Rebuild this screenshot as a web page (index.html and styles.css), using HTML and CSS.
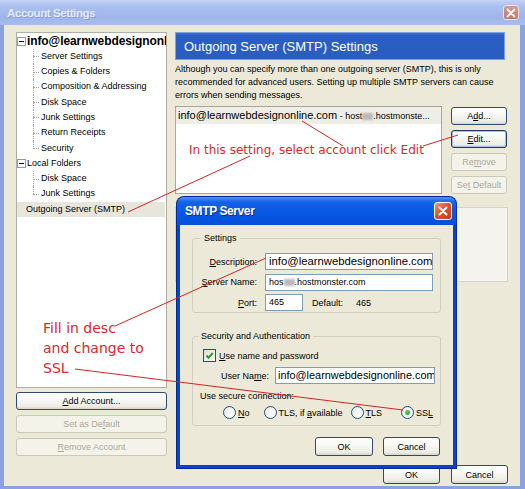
FILE: index.html
```html
<!DOCTYPE html>
<html>
<head>
<meta charset="utf-8">
<title>Account Settings</title>
<link rel="stylesheet" href="styles.css">
</head>
<body>
<div class="win">
  <div class="titlebar">
    <span class="title">Account Settings</span>
    <span class="xbtn xbtn-inactive"><svg width="10" height="10" viewBox="0 0 10 10"><path d="M1.5 1.5 L8.5 8.5 M8.5 1.5 L1.5 8.5" stroke="#fff" stroke-width="1.8" stroke-linecap="round"/></svg></span>
  </div>
  <div class="frame">
    <div class="client">
      <div class="leftcol">
        <div class="tree">
          <div class="node root"><span class="exp"></span><span class="acct">info@learnwebdesignonl</span></div>
          <ul class="kids">
            <li>Server Settings</li>
            <li>Copies &amp; Folders</li>
            <li>Composition &amp; Addressing</li>
            <li>Disk Space</li>
            <li>Junk Settings</li>
            <li>Return Receipts</li>
            <li>Security</li>
          </ul>
          <div class="node root"><span class="exp"></span><span>Local Folders</span></div>
          <ul class="kids">
            <li>Disk Space</li>
            <li>Junk Settings</li>
          </ul>
          <div class="node sel"><span>Outgoing Server (SMTP)</span></div>
        </div>
        <div class="leftbtns">
          <button class="btn wide"><span><u>A</u>dd Account...</span></button>
          <button class="btn wide" disabled><span>Set as De<u>f</u>ault</span></button>
          <button class="btn wide" disabled><span><u>R</u>emove Account</span></button>
        </div>
      </div>
      <div class="rightcol">
        <div class="hdr">Outgoing Server (SMTP) Settings</div>
        <p class="info">Although you can specify more than one outgoing server (SMTP), this is only recommended for advanced users. Setting up multiple SMTP servers can cause errors when sending messages.</p>
        <div class="listrow">
          <div class="list">
            <div class="item"><span class="em">info@learnwebdesignonline.com</span><span class="sm"> - host<i class="blur"></i>.hostmonste...</span></div>
          </div>
          <div class="sidebtns">
            <button class="btn"><span>A<u>d</u>d...</span></button>
            <button class="btn focus"><span><u>E</u>dit...</span></button>
            <button class="btn" disabled><span>Re<u>m</u>ove</span></button>
            <button class="btn" disabled><span>Se<u>t</u> Default</span></button>
          </div>
        </div>
        <div class="details"></div>
        <div class="okrow">
          <button class="btn okb">OK</button>
          <button class="btn okb">Cancel</button>
        </div>
      </div>
    </div>
  </div>
</div>

<div class="dlg">
  <div class="dlg-title">
    <span class="dlg-name">SMTP Server</span>
    <span class="xbtn xbtn-active"><svg width="10" height="10" viewBox="0 0 10 10"><path d="M1.5 1.5 L8.5 8.5 M8.5 1.5 L1.5 8.5" stroke="#fff" stroke-width="2" stroke-linecap="round"/></svg></span>
  </div>
  <div class="dlg-body">
    <fieldset class="grp g1">
      <legend>Settings</legend>
      <div class="form">
        <label class="lbl"><u>D</u>escription:</label>
        <div class="field em">info@learnwebdesignonline.com</div>
        <label class="lbl"><u>S</u>erver Name:</label>
        <div class="field">hos<i class="blur"></i>.hostmonster.com</div>
        <label class="lbl"><u>P</u>ort:</label>
        <div class="portrow"><div class="field port">465</div><span class="deflbl">Default:</span><span>465</span></div>
      </div>
    </fieldset>
    <fieldset class="grp g2">
      <legend>Security and Authentication</legend>
      <div class="chkrow">
        <span class="chk"><svg width="11" height="11" viewBox="0 0 11 11"><path d="M2.5 5.5 L4.5 7.8 L8.8 3" stroke="#21a121" stroke-width="2" fill="none"/></svg></span>
        <span><u>U</u>se name and password</span>
      </div>
      <div class="userrow">
        <label class="ulbl">User Na<u>m</u>e:</label>
        <div class="field em user">info@learnwebdesignonline.com</div>
      </div>
      <div class="secl">Use secure connection:</div>
      <div class="radios">
        <span class="rad"><span class="circ"></span><span><u>N</u>o</span></span>
        <span class="rad"><span class="circ"></span><span>TLS, if <u>a</u>vailable</span></span>
        <span class="rad"><span class="circ"></span><span><u>T</u>LS</span></span>
        <span class="rad"><span class="circ on"></span><span>SS<u>L</u></span></span>
      </div>
    </fieldset>
    <div class="dlgbtns">
      <button class="btn dbtn">OK</button>
      <button class="btn dbtn">Cancel</button>
    </div>
  </div>
</div>

<svg class="ann" width="525" height="489" viewBox="0 0 525 489">
  <g stroke="#d42424" stroke-width="1" fill="none">
    <line x1="128" y1="212" x2="250" y2="156"/>
    <line x1="302" y1="121" x2="343" y2="146"/>
    <line x1="423" y1="146" x2="458" y2="135"/>
    <line x1="115" y1="326" x2="266" y2="258"/>
    <line x1="75" y1="369" x2="403" y2="410"/>
  </g>
</svg>
<div class="note n1">In this setting, select account click Edit</div>
<div class="note n2">Fill in desc<br>and change to<br>SSL</div>
</body>
</html>
```

FILE: styles.css
```css
* { box-sizing: border-box; }
html, body { margin: 0; padding: 0; }
body {
  width: 525px; height: 489px; overflow: hidden; position: relative;
  font-family: "Liberation Sans", Arial, sans-serif; font-size: 9px; color: #000;
  background: #ece9d8;
}
u { text-decoration: underline; text-underline-offset: 1px; }

.win { width: 525px; height: 489px; display: flex; flex-direction: column; background: #8aa2e0; }
.titlebar {
  height: 25px; flex: none; display: flex; align-items: center; justify-content: space-between;
  padding: 0 6px 0 7px;
  background: linear-gradient(#c4d3f5, #abbfef 25%, #9fb5ea 70%, #a9bdee);
}
.title { font-weight: bold; font-size: 11.5px; letter-spacing: -0.4px; color: #e3eaf9; text-shadow: 1px 1px 0 #8a9fd8; }
.xbtn { display: flex; align-items: center; justify-content: center; border-radius: 3px; }
.xbtn-inactive { width: 16px; height: 15px; background: linear-gradient(#d49c94, #c27468); border: 1px solid #e9e2f0; }
.xbtn-active { width: 18px; height: 18px; background: linear-gradient(135deg, #f09a7c, #e0532f 45%, #c73c1c); border: 1px solid #fff; }

.frame { flex: 1; display: flex; padding: 0 5px 3px 4px; }
.client { flex: 1; display: flex; gap: 8px; padding: 7px 12px 2px 12px; background: #ece9d8; }

.leftcol { width: 151px; flex: none; display: flex; flex-direction: column; }
.tree { height: 356px; background: #fff; border: 1px solid #aeb0a8; padding-top: 0.5px; overflow: hidden; }
.node { height: 15.3px; line-height: 15.3px; display: flex; align-items: center; white-space: nowrap; overflow: hidden; }
.root .exp {
  width: 9px; height: 9px; flex: none; border: 1px solid #919b9c; background: #fff; position: relative; margin-right: 1px;
}
.root .exp::after { content: ""; position: absolute; left: 1px; top: 3px; width: 5px; height: 1px; background: #000; }
.acct { font-weight: bold; font-size: 12px; letter-spacing: -0.1px; }
.sel { background: #e8e6dc; padding-left: 9px; margin-right: 1px; }
.kids { list-style: none; margin: 0; padding: 0 0 0 24px; }
.kids li { height: 15.3px; line-height: 15.3px; white-space: nowrap; position: relative; }
.kids li::before { content: ""; position: absolute; left: -8px; top: 7.5px; width: 6px; border-top: 1px dotted #a0a0a0; }
.kids li::after { content: ""; position: absolute; left: -8px; top: 0; height: 15.3px; border-left: 1px dotted #a0a0a0; }
.kids li:last-child::after { height: 8px; }

.leftbtns { display: flex; flex-direction: column; gap: 5px; margin-top: 4px; }

.btn {
  font-family: "Liberation Sans", Arial, sans-serif; font-size: 9px; color: #000;
  height: 18px; padding: 0; border: 1px solid #2c4a74; border-radius: 3px;
  background: linear-gradient(#ffffff, #f6f6f1 50%, #ecebe3 85%, #d8d5c6);
  text-align: center; white-space: nowrap;
}
.btn:disabled { color: #aca899; border-color: #cac8bb; background: #f4f3ea; }
.btn.focus { border: 1px solid #1e3b63; box-shadow: inset 0 0 0 1px #a9c0e6; }
.btn.wide { width: 151px; }

.rightcol { width: 333px; flex: none; display: flex; flex-direction: column; }
.hdr {
  height: 28px; margin-right: 3px; flex: none; display: flex; align-items: center; padding-left: 8px;
  background: linear-gradient(#3d6fcf, #2a5ec2 10%, #2a5dc0); color: #fff; font-size: 13px; border: 1px solid #7f9fda;
}
.info { margin: 3px 0 0; line-height: 13px; width: 330px; }
.listrow { display: flex; gap: 9px; margin-top: 4px; height: 88px; flex: none; }
.list { width: 267px; height: 88px; background: #fff; border: 1px solid #a5a7a0; padding: 0; }
.item { height: 17px; line-height: 17px; padding-left: 2px; background: #efeee6; white-space: nowrap; overflow: hidden; }
.em { font-size: 11px; }
.sm { font-size: 9px; }
.blur { display: inline-block; width: 11px; height: 7px; background: #b9b9b9; filter: blur(1.3px); vertical-align: -1px; }
.sidebtns { width: 56px; display: flex; flex-direction: column; gap: 5px; padding-top: 1px; }

.details { margin-top: 13px; height: 75px; background: #f4f3ee; border: 1px solid #d6d4c8; flex: none; }
.okrow { margin-top: auto; display: flex; justify-content: flex-end; gap: 11px; }
.okb { width: 57px; height: 19px; }

/* SMTP dialog (overlapping window) */
.dlg {
  position: absolute; left: 177px; top: 197px; width: 279px; height: 271px;
  background: #0842cf; border-radius: 7px 7px 0 0; padding: 0 3px 3px;
  display: flex; flex-direction: column; box-shadow: 0 0 0 1px #002a9c;
}
.dlg-title {
  height: 28px; flex: none; margin: 0 -3px; padding: 0 4px 0 8px; border-radius: 7px 7px 0 0;
  display: flex; align-items: center; justify-content: space-between;
  background: linear-gradient(#4d92f8, #1662ea 18%, #0758e3 55%, #0553df 85%, #0a4ed3);
}
.dlg-name { color: #fff; font-weight: bold; font-size: 12px; letter-spacing: -0.4px; text-shadow: 1px 1px 0 #0a2f9a; }
.dlg-body { flex: 1; background: #ece9d8; padding: 7px 12px 0; display: flex; flex-direction: column; }

.grp { margin: 0; border: 1px solid #d0d0bf; border-radius: 3px; padding: 0; min-width: 0; }
.grp legend { padding: 0 3px; margin-left: 5px; line-height: 12px; font-size: 9px; }
.g1 { padding: 9px 0 1px 3px; }
.form { display: grid; grid-template-columns: 61px 168px; column-gap: 8px; row-gap: 3.5px; align-items: center; }
.lbl { text-align: right; white-space: nowrap; }
.field {
  height: 17px; line-height: 15px; padding-left: 3px; background: #fff; border: 1px solid #7f9db9;
  white-space: nowrap; overflow: hidden;
}
.field.em { font-size: 11.3px; }
.field.user { font-size: 10.9px; padding-left: 2px; }
.portrow { display: flex; align-items: center; }
.port { width: 38px; }
.deflbl { margin-left: 9px; margin-right: 13px; }

.g2 { margin-top: 17px; padding: 7px 0 6px 0; }
.chkrow { display: flex; align-items: center; gap: 3px; padding-left: 10px; height: 13px; }
.chk {
  width: 13px; height: 13px; border: 1px solid #1c5180; background: linear-gradient(135deg, #dcdcd6, #fff);
  display: flex; align-items: center; justify-content: center;
}
.userrow { display: flex; align-items: center; margin-top: 5px; padding-left: 28px; height: 17px; }
.ulbl { width: 54px; white-space: nowrap; }
.user { width: 160px; }
.secl { margin-top: 6px; padding-left: 7px; height: 12px; line-height: 12px; }
.radios { display: flex; align-items: center; margin-top: 4px; height: 13px; padding-left: 30px; }
.rad { display: flex; align-items: center; gap: 2px; white-space: nowrap; }
.rad + .rad { margin-left: 14px; }
.rad:nth-child(3) { margin-left: 8px; }
.rad:nth-child(4) { margin-left: 19px; }
.circ {
  width: 13px; height: 13px; border-radius: 50%; border: 1px solid #1c5180;
  background: radial-gradient(circle at 65% 65%, #fff, #e4e3dc); position: relative;
}
.circ.on::after {
  content: ""; position: absolute; left: 3px; top: 3px; width: 5px; height: 5px; border-radius: 50%;
  background: radial-gradient(circle at 35% 35%, #5fd35f, #1e9a1e);
}
.dlgbtns { display: flex; justify-content: flex-end; gap: 10px; margin-top: 11px; padding-right: 1px; }
.dbtn { height: 19px; }
.dbtn:first-child { width: 58px; }
.dbtn:last-child { width: 57px; }

/* annotations drawn over the screenshot */
.ann { position: absolute; left: 0; top: 0; pointer-events: none; }
.note { position: absolute; color: #e0262b; font-family: "DejaVu Sans", sans-serif; white-space: nowrap; }
.n1 { left: 189px; top: 143px; font-size: 12px; line-height: 14px; }
.n2 { left: 43px; top: 318px; font-size: 14px; line-height: 20px; }
```
